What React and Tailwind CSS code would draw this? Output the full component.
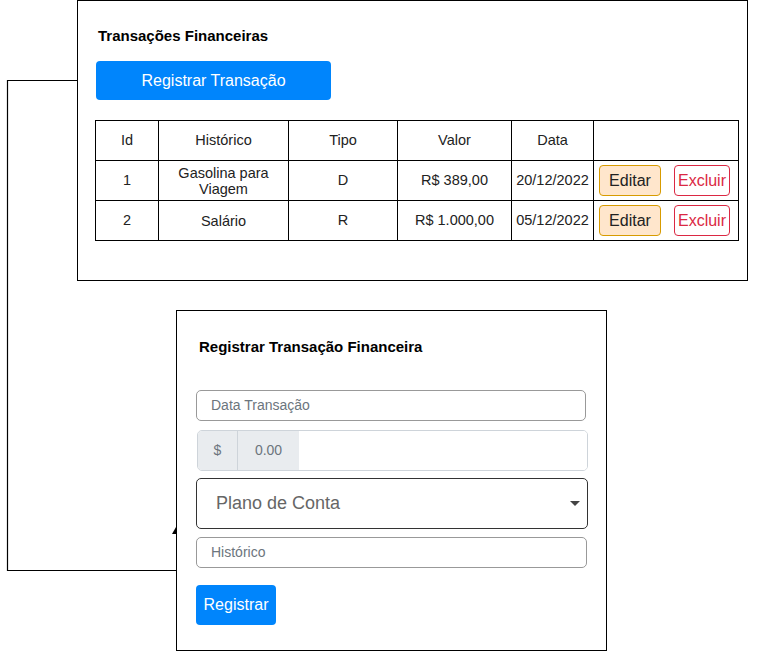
import React from 'react';

const font = { fontFamily: '"Liberation Sans", Arial, Helvetica, sans-serif' };

const rows = [
  { id: 1, hist: ['Gasolina para', 'Viagem'], tipo: 'D', valor: 'R$ 389,00', data: '20/12/2022' },
  { id: 2, hist: ['Salário'], tipo: 'R', valor: 'R$ 1.000,00', data: '05/12/2022' },
];

const cols = ['w-[63px]', 'w-[130px]', 'w-[109px]', 'w-[114px]', 'w-[82px]', 'w-[145px]'];

function TransactionsWindow() {
  return (
    <div className="absolute left-[77px] top-0 w-[671px] h-[281px] border border-black bg-white flex flex-col">
      <h2 className="ml-[20px] mt-[26px] text-[15px] leading-[17px] font-bold text-black">
        Transações Financeiras
      </h2>
      <button className="ml-[18px] mt-[17px] w-[235px] h-[39px] rounded-[4px] bg-[#0085FC] text-white text-[16px]">
        Registrar Transação
      </button>
      <table className="ml-[17px] mt-[20px] w-[643px] table-fixed border-collapse text-[14.5px] text-[#222]">
        <colgroup>
          {cols.map((c, i) => (
            <col key={i} className={c} />
          ))}
        </colgroup>
        <thead>
          <tr className="h-[40px]">
            {['Id', 'Histórico', 'Tipo', 'Valor', 'Data', ''].map((h, i) => (
              <th key={i} className="border border-black font-normal text-center p-0">
                {h}
              </th>
            ))}
          </tr>
        </thead>
        <tbody>
          {rows.map((r) => (
            <tr key={r.id} className="h-[40px]">
              <td className="border border-black text-center p-0">{r.id}</td>
              <td className="border border-black text-center p-0 leading-[16px]">
                {r.hist.map((l) => (
                  <div key={l}>{l}</div>
                ))}
              </td>
              <td className="border border-black text-center p-0">{r.tipo}</td>
              <td className="border border-black text-center p-0">{r.valor}</td>
              <td className="border border-black text-center p-0 whitespace-nowrap">{r.data}</td>
              <td className="border border-black p-0">
                <div className="flex items-center pl-[5px] gap-[13px]">
                  <button className="w-[62px] h-[31px] rounded-[4px] border border-[#D79B00] bg-[#FFE6CC] text-[16px] text-[#222]">
                    Editar
                  </button>
                  <button className="w-[56px] h-[31px] rounded-[4px] border border-[#DB2843] bg-white text-[16px] text-[#DB2843]">
                    Excluir
                  </button>
                </div>
              </td>
            </tr>
          ))}
        </tbody>
      </table>
    </div>
  );
}

function RegisterWindow() {
  return (
    <div className="absolute left-[176px] top-[310px] w-[431px] h-[341px] border border-black bg-white flex flex-col pl-[19px]">
      <h2 className="ml-[3px] mt-[27px] text-[15px] leading-[17px] font-bold text-black">
        Registrar Transação Financeira
      </h2>
      <div className="mt-[35px] w-[390px] h-[31px] rounded-[5px] border border-[#999] flex items-center pl-[14px] text-[14px] text-[#6C757D]">
        Data Transação
      </div>
      <div className="mt-[9px] ml-[1px] w-[391px] h-[41px] rounded-[5px] border border-[#CED4DA] flex overflow-hidden text-[14px] text-[#6C757D]">
        <div className="w-[40px] bg-[#E9ECEF] border-r border-[#CED4DA] flex items-center justify-center">$</div>
        <div className="w-[61px] bg-[#E9ECEF] flex items-center justify-center">0.00</div>
        <div className="flex-1 bg-white" />
      </div>
      <div className="mt-[7px] w-[392px] h-[51px] rounded-[5px] border border-[#333] flex items-center justify-between pl-[19px] pr-[7px] text-[18px] text-[#666]">
        <span>Plano de Conta</span>
        <svg width="10" height="6" viewBox="0 0 10 6">
          <path d="M0 0 L10 0 L5 5 Z" fill="#444" />
        </svg>
      </div>
      <div className="mt-[8px] w-[391px] h-[31px] rounded-[5px] border border-[#999] flex items-center pl-[14px] text-[14px] text-[#6C757D]">
        Histórico
      </div>
      <button className="mt-[17px] w-[80px] h-[40px] rounded-[4px] bg-[#0085FC] text-white text-[16px]">
        Registrar
      </button>
    </div>
  );
}

export default function App() {
  return (
    <div className="relative w-[768px] h-[651px] bg-white overflow-hidden" style={font}>
      <svg className="absolute left-0 top-0" width="768" height="651">
        <polyline
          points="77,80.5 7.5,80.5 7.5,570.5 176,570.5"
          fill="none"
          stroke="#000"
          strokeWidth="1.2"
        />
        <path d="M172 534 L176 527 L177 534 Z" fill="#000" />
      </svg>
      <TransactionsWindow />
      <RegisterWindow />
    </div>
  );
}
